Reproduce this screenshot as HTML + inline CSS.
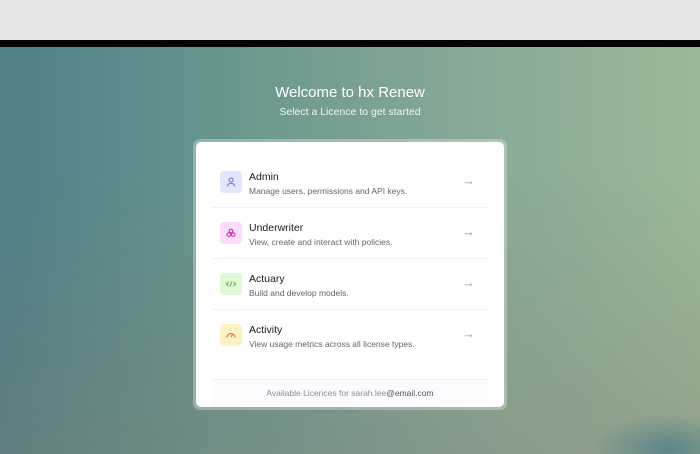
<!DOCTYPE html>
<html><head><style>
*{margin:0;padding:0;box-sizing:border-box}
body{width:700px;height:454px;overflow:hidden;font-family:"Liberation Sans",sans-serif;position:relative;background:#e6e4e7}
.top{position:absolute;left:0;top:0;width:700px;height:40px;background:#e6e4e7}
.blk{position:absolute;left:0;top:40px;width:700px;height:7px;background:#050305}
.bg{position:absolute;left:0;top:47px;width:700px;height:407px;overflow:hidden;
background:linear-gradient(90deg,#4d7f86 0%,#6a9890 35%,#86a894 65%,#9bb898 100%)}
.bg:before{content:"";position:absolute;inset:0;background:linear-gradient(180deg,rgba(0,0,0,0) 30%,rgba(130,125,115,.35) 100%)}
.bg:after{content:"";position:absolute;right:-50px;bottom:-30px;width:160px;height:70px;border-radius:50%;background:radial-gradient(rgba(79,127,136,.8),rgba(79,127,136,0) 70%)}
h1{position:absolute;top:84px;width:700px;text-align:center;color:#fff;font-size:15px;font-weight:normal}
.sub{position:absolute;top:106px;width:700px;text-align:center;color:#eef3ef;font-size:10.5px}
.outer{position:absolute;left:193px;top:139px;width:314px;height:271px;border-radius:7px;background:rgba(255,255,255,.3)}
.card{position:absolute;left:196px;top:142px;width:308px;height:265px;border-radius:5px;background:#fff}
.row{position:absolute;left:16px;width:276px;height:51px;border-bottom:1px solid #f0eff3}
.ic{position:absolute;left:8px;top:14px;width:22px;height:22px;border-radius:4px;display:flex;align-items:center;justify-content:center}
.t{position:absolute;left:37px;top:14px;font-size:10.5px;color:#1a1a1f}
.d{position:absolute;left:37px;top:29px;font-size:8.5px;color:#66646d}
.ar{position:absolute;left:250px;top:16px;color:#9a98a0;font-size:13px}
.foot{position:absolute;left:16px;top:237px;width:276px;height:28px;border-top:1px solid #f0eff3;background:#fcfbfe;text-align:center;font-size:8.5px;color:#8d8b94;padding-top:8px}
</style></head><body>
<div class="top"></div><div class="blk"></div>
<div class="bg"></div>
<h1>Welcome to hx Renew</h1>
<div class="sub">Select a Licence to get started</div>
<div class="outer"></div>
<div class="card">
 <div class="row" style="top:15px">
  <div class="ic" style="background:#e2e6fd"><svg width="12" height="12" viewBox="0 0 12 12" fill="none" stroke="#6d6fd8" stroke-width="1"><circle cx="6" cy="4" r="2"/><path d="M2.5 10.5c0-2 1.6-3.3 3.5-3.3s3.5 1.3 3.5 3.3"/></svg></div>
  <div class="t">Admin</div><div class="d">Manage users, permissions and API keys.</div><div class="ar">→</div></div>
 <div class="row" style="top:66px">
  <div class="ic" style="background:#fbdcfb"><svg width="12" height="12" viewBox="0 0 12 12" fill="none" stroke="#b52aa8" stroke-width="1"><circle cx="6" cy="4" r="1.8"/><circle cx="3.8" cy="7.6" r="1.8"/><circle cx="8.2" cy="7.6" r="1.8"/></svg></div>
  <div class="t">Underwriter</div><div class="d">View, create and interact with policies.</div><div class="ar">→</div></div>
 <div class="row" style="top:117px">
  <div class="ic" style="background:#dffad4"><svg width="12" height="12" viewBox="0 0 12 12" fill="none" stroke="#5fa34a" stroke-width="1"><path d="M3.5 4L1.5 6l2 2M8.5 4l2 2-2 2M7 3.5L5 8.5"/></svg></div>
  <div class="t">Actuary</div><div class="d">Build and develop models.</div><div class="ar">→</div></div>
 <div class="row" style="top:168px;border-bottom:none">
  <div class="ic" style="background:#fdf0c2"><svg width="12" height="12" viewBox="0 0 12 12" fill="none" stroke="#d2643c" stroke-width="1"><path d="M2 8.5a4 4 0 0 1 8 0"/><path d="M6 8l1.5-2.5"/></svg></div>
  <div class="t">Activity</div><div class="d">View usage metrics across all license types.</div><div class="ar">→</div></div>
 <div class="foot">Available Licences for sarah.lee<span style="color:#55535b">@email.com</span></div>
</div>
</body></html>
